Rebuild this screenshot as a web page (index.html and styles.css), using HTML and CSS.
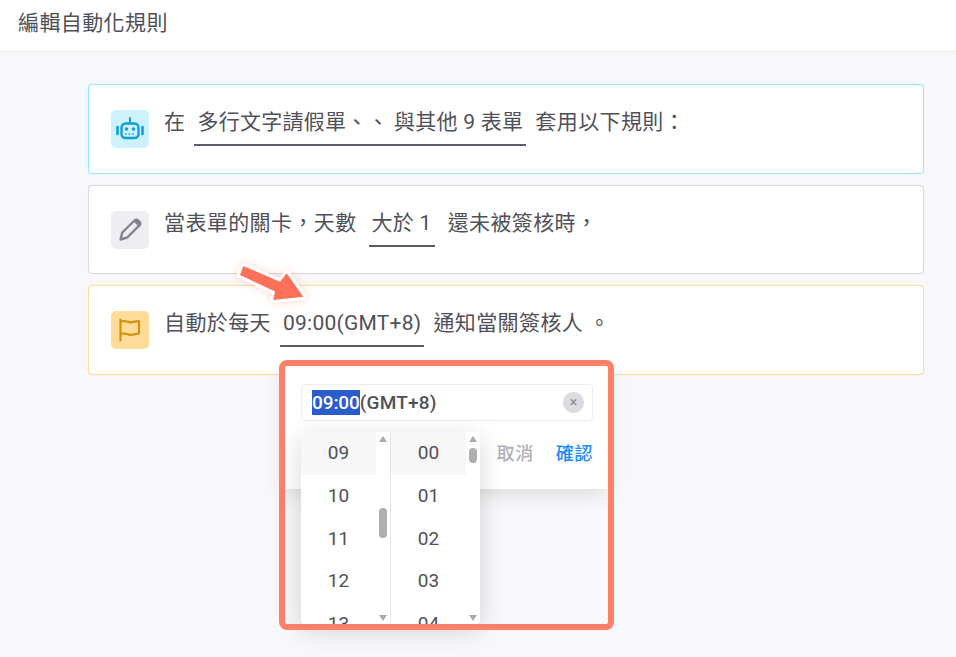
FILE: index.html
```html
<!DOCTYPE html>
<html lang="zh-Hant">
<head>
<meta charset="utf-8">
<title>編輯自動化規則</title>
<link rel="stylesheet" href="styles.css">
</head>
<body>
<div class="app">
  <header class="topbar">編輯自動化規則</header>
  <main class="rules">
    <section class="card card-cyan">
      <span class="badge badge-cyan">
        <svg viewBox="0 0 38 38" width="38" height="38" fill="none" stroke="#0ea0d6" stroke-width="2.4">
          <path d="M19 8v5" stroke-linecap="round" stroke-width="2"/>
          <rect x="10.500" y="13.500" width="17" height="14.500" rx="4"/>
          <path d="M6.500 17v7M31.500 17v7" stroke-width="2.600" stroke-linecap="round"/>
          <circle cx="15.500" cy="19" r="1.700" fill="#0ea0d6" stroke="none"/>
          <circle cx="22.500" cy="19" r="1.700" fill="#0ea0d6" stroke="none"/>
          <path d="M14 24h10" stroke-width="1.500" stroke-dasharray="1.600 2"/>
        </svg>
      </span>
      <div class="sentence">
        <span>在</span>
        <span class="token">多行文字請假單、、 與其他 9 表單</span>
        <span>套用以下規則：</span>
      </div>
    </section>
    <section class="card card-grey">
      <span class="badge badge-grey">
        <svg viewBox="0 0 38 38" width="38" height="38" fill="none">
          <path d="M9.500 28.500l1.800-7L23.500 9.500c1-1 2.600-1 3.600 0l1.200 1.200c1 1 1 2.600 0 3.600L16.200 26.500 9.500 28.500z" stroke="#83838f" stroke-width="2.400" stroke-linejoin="round"/>
          <path d="M22.500 10.500l5.800 5.800 1-1c1.300-1.300 1.300-3.300 0-4.600l-1-1c-1.300-1.300-3.300-1.300-4.600 0l-1.200.8z" fill="#83838f"/>
        </svg>
      </span>
      <div class="sentence">
        <span>當表單的關卡，天數</span>
        <span class="token token-spaced">大於 1</span>
        <span>還未被簽核時，</span>
      </div>
    </section>
    <section class="card card-amber">
      <span class="badge badge-amber">
        <svg viewBox="0 0 38 38" width="38" height="38" fill="none" stroke="#d2930f" stroke-width="2.200">
          <path d="M9.500 8.500v21" stroke-linecap="round"/>
          <path d="M9.500 10.500c5-1.800 7 1.200 10.500.8 2.400-.3 5-.8 8-1.300v12.500c-3 .6-5.600 1.100-8 1.300-3.500.3-5.500-2.600-10.500-.8" stroke-linejoin="round"/>
        </svg>
      </span>
      <div class="sentence">
        <span>自動於每天</span>
        <span class="token">09:00(GMT+8)</span>
        <span>通知當關簽核人 。</span>
      </div>
    </section>
  </main>

  <svg class="pointer" viewBox="0 0 90 60" width="90" height="60">
    <defs>
      <filter id="glow" x="-30%" y="-30%" width="160%" height="160%">
        <feDropShadow dx="0" dy="0" stdDeviation="5" flood-color="#ff7a5c" flood-opacity=".3"/>
      </filter>
    </defs>
    <path class="pointer-shape" filter="url(#glow)" d="M11.300 11L8 20l35 16.500L41.300 45l30-3.300L54.700 18.300 48 26.700z"/>
  </svg>

  <div class="picker">
    <div class="picker-panel">
      <div class="time-input">
        <span><span class="selected">09:00</span>(GMT+8)</span>
        <span class="clear">×</span>
      </div>
      <div class="picker-actions">
        <span class="cancel">取消</span>
        <span class="confirm">確認</span>
      </div>
    </div>
    <div class="dropdown">
      <div class="column">
        <ul class="options">
          <li class="current">09</li><li>10</li><li>11</li><li>12</li><li>13</li>
        </ul>
        <div class="scrollbar">
          <i class="arrow-up"></i>
          <b class="thumb thumb-hours"></b>
          <i class="arrow-down"></i>
        </div>
      </div>
      <div class="column">
        <ul class="options">
          <li class="current">00</li><li>01</li><li>02</li><li>03</li><li>04</li>
        </ul>
        <div class="scrollbar">
          <i class="arrow-up"></i>
          <b class="thumb thumb-minutes"></b>
          <i class="arrow-down"></i>
        </div>
      </div>
    </div>
    <div class="frame"></div>
  </div>
</div>
</body>
</html>
```
FILE: styles.css
```css
* { box-sizing: border-box; }
html, body { margin: 0; height: 100%; overflow: hidden; }
body {
  background: #f8f8fa;
  color: #50505a;
  font-family: Roboto, "Noto Sans CJK TC", sans-serif;
  font-size: 21px;
  letter-spacing: .4px;
}
.app { position: relative; width: 956px; height: 657px; overflow: hidden; }

.topbar {
  height: 52px;
  padding: 8px 18px 0;
  background: #fff;
  border-bottom: 1px solid #eeeef0;
  line-height: 30px;
}

.rules {
  display: flex;
  flex-direction: column;
  gap: 11px;
  padding: 32px 32px 0 88px;
}
.card {
  display: flex;
  gap: 15px;
  height: 90px;
  padding: 25px 22px 0;
  background: #fff;
  border: 1px solid;
  border-radius: 4px;
}
.card-cyan { border-color: #9de8fd; box-shadow: 0 0 1px #9de8fd; }
.card-grey { height: 89px; border-color: #d9d9e2; box-shadow: 0 0 1px #d9d9e2; }
.card-amber { border-color: #fddca0; box-shadow: 0 0 1px #fddca0; }

.badge {
  flex: none;
  width: 38px;
  height: 38px;
  border-radius: 5px;
}
.badge svg { display: block; }
.badge-cyan { background: #cdf1fd; }
.badge-grey { background: #eeeef2; }
.badge-amber { background: #ffdc98; }

.sentence {
  display: flex;
  align-items: flex-start;
  gap: 9px;
  margin-top: -2px;
  line-height: 28px;
}
.token {
  padding: 0 3px 8px;
  border-bottom: 2px solid #5c5c66;
  letter-spacing: .25px;
}
.token-spaced { margin: 0 4px 0 3px; }

.pointer { position: absolute; left: 232px; top: 255px; }
.pointer-shape {
  fill: #ff7059;
  stroke: #fff;
  stroke-width: 6;
  stroke-linejoin: round;
  paint-order: stroke;
}

.picker { position: absolute; left: 279px; top: 360px; width: 335px; height: 270px; }
.picker-panel {
  position: absolute;
  left: 6px;
  top: 6px;
  width: 323px;
  height: 123px;
  background: #fff;
  box-shadow: 0 4px 20px rgba(0, 0, 0, .12);
}
.time-input {
  position: absolute;
  left: 16px;
  top: 18px;
  width: 292px;
  height: 37px;
  display: flex;
  align-items: center;
  justify-content: space-between;
  padding: 0 8px 0 10px;
  border: 1px solid #eeeef0;
  border-radius: 4px;
  font-size: 19px;
  font-weight: 500;
  letter-spacing: .2px;
}
.selected { background: #2a5ccb; color: #fff; padding: 1px 0; letter-spacing: -.1px; }
.clear {
  width: 21px;
  height: 21px;
  border-radius: 50%;
  background: #dcdce0;
  color: #8a8a92;
  font-size: 14px;
  font-weight: 400;
  line-height: 21px;
  text-align: center;
}
.picker-actions {
  position: absolute;
  right: 15px;
  top: 75px;
  display: flex;
  gap: 22px;
  font-size: 18px;
  line-height: 26px;
  letter-spacing: .6px;
}
.cancel { color: #b0b0b8; font-weight: 500; }
.confirm { color: #1a8cff; font-weight: 500; }

.dropdown {
  position: absolute;
  left: 22px;
  top: 72px;
  width: 179px;
  height: 192px;
  display: flex;
  background: #fff;
  border-radius: 4px;
  box-shadow: 0 6px 26px rgba(0, 0, 0, .16);
  overflow: hidden;
}
.column { display: flex; width: 90px; }
.column:first-child { border-right: 1px solid #e6e6e8; }
.column:last-child { width: 89px; }
.options {
  width: 75px;
  margin: 0;
  padding: 0;
  list-style: none;
  font-size: 19px;
  letter-spacing: 0;
  text-align: center;
}
.options li { height: 42.700px; line-height: 41px; }
.options .current { height: 43px; background: #f7f7f7; }
.scrollbar { position: relative; flex: 1; }
.arrow-up, .arrow-down {
  position: absolute;
  left: 3px;
  width: 0;
  height: 0;
  border-left: 4px solid transparent;
  border-right: 4px solid transparent;
}
.arrow-up { top: 4px; border-bottom: 6px solid #ababab; }
.arrow-down { top: 183px; border-top: 6px solid #ababab; }
.thumb {
  position: absolute;
  left: 3px;
  width: 8px;
  background: #aeaeae;
  border-radius: 4px;
}
.thumb-hours { top: 76px; height: 30px; }
.thumb-minutes { top: 16px; height: 15px; }

.frame {
  position: absolute;
  inset: 0;
  border: 6px solid #ff8069;
  border-radius: 8px;
}
```
